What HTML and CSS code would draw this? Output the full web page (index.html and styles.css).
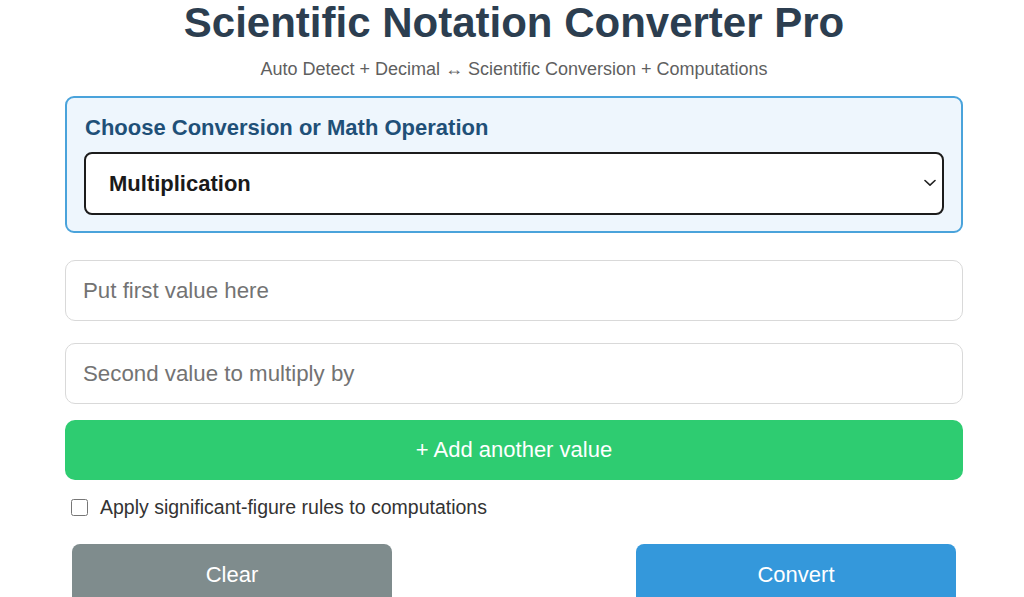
FILE: index.html
```html
<!DOCTYPE html>
<html lang="en">
<head>
<meta charset="utf-8">
<title>Scientific Notation Converter Pro</title>
<link rel="stylesheet" href="styles.css">
</head>
<body>
<main class="container">
  <h1 class="title">Scientific Notation Converter Pro</h1>
  <p class="subtitle">Auto Detect + Decimal ↔ Scientific Conversion + Computations</p>

  <section class="op-panel">
    <label class="op-label" for="op">Choose Conversion or Math Operation</label>
    <div class="select-wrap">
      <select id="op" class="op-select">
        <option>Multiplication</option>
        <option>Division</option>
        <option>Addition</option>
        <option>Subtraction</option>
      </select>
      <svg class="chevron" width="12" height="8" viewBox="0 0 12 8" aria-hidden="true">
        <path d="M1 1.5 L6 6.2 L11 1.5" fill="none" stroke="#222222" stroke-width="1.6" stroke-linecap="round" stroke-linejoin="round"/>
      </svg>
    </div>
  </section>

  <input class="value-input first" type="text" placeholder="Put first value here">
  <input class="value-input second" type="text" placeholder="Second value to multiply by">

  <button class="add-btn" type="button">+ Add another value</button>

  <label class="sigfig-row">
    <input class="sigfig-check" type="checkbox">
    <span>Apply significant-figure rules to computations</span>
  </label>

  <div class="actions">
    <button class="btn btn-clear" type="button">Clear</button>
    <button class="btn btn-convert" type="button">Convert</button>
  </div>
</main>
</body>
</html>
```
FILE: styles.css
```css
* {
  box-sizing: border-box;
}

html, body {
  margin: 0;
  padding: 0;
  background: #ffffff;
}

body {
  font-family: "Liberation Sans", Arial, sans-serif;
  color: #333333;
}

.container {
  width: 898px;
  margin: 0 0 0 65px;
  display: flex;
  flex-direction: column;
}

.title {
  margin: 0;
  font-size: 42px;
  line-height: 46px;
  font-weight: 700;
  color: #2c3e50;
  text-align: center;
}

.subtitle {
  margin: 13px 0 0;
  font-size: 18px;
  color: #5f5f5f;
  text-align: center;
}

.op-panel {
  margin-top: 16px;
  border: 2px solid #4aa3db;
  border-radius: 9px;
  background: #eef6fd;
  padding: 17px 17px 16px;
  display: flex;
  flex-direction: column;
}

.op-label {
  font-size: 22px;
  font-weight: 700;
  color: #1f5078;
  padding-left: 1px;
}

.select-wrap {
  position: relative;
  margin-top: 11px;
  display: flex;
}

.op-select {
  flex: 1;
  height: 63px;
  border: 2px solid #1c1c1c;
  border-radius: 8px;
  background: #ffffff;
  font-family: "Liberation Sans", Arial, sans-serif;
  font-size: 22px;
  font-weight: 700;
  color: #1a1a1a;
  padding: 0 40px 0 23px;
  appearance: none;
  -webkit-appearance: none;
}

.chevron {
  position: absolute;
  right: 8px;
  top: 27px;
  pointer-events: none;
}

.value-input {
  height: 61px;
  border: 1px solid #d9d9d9;
  border-radius: 10px;
  background: #ffffff;
  font-family: "Liberation Sans", Arial, sans-serif;
  font-size: 22.3px;
  padding: 0 17px;
  color: #333333;
}

.value-input::placeholder {
  color: #737373;
}

.value-input.first {
  margin-top: 27px;
}

.value-input.second {
  margin-top: 22px;
}

.add-btn {
  margin-top: 16px;
  height: 60px;
  border: none;
  border-radius: 10px;
  background: #2ecc71;
  color: #ffffff;
  font-family: "Liberation Sans", Arial, sans-serif;
  font-size: 22px;
}

.sigfig-row {
  margin-top: 16px;
  display: flex;
  align-items: center;
  gap: 12px;
  padding-left: 6px;
  font-size: 19.5px;
  line-height: 22px;
  color: #333333;
}

.sigfig-check {
  width: 17px;
  height: 17px;
  margin: 0;
}

.actions {
  margin-top: 26px;
  display: flex;
  justify-content: space-between;
  padding: 0 7px;
}

.btn {
  width: 320px;
  height: 61px;
  border: none;
  border-radius: 8px;
  color: #ffffff;
  font-family: "Liberation Sans", Arial, sans-serif;
  font-size: 22px;
}

.btn-clear {
  background: #7f8c8d;
}

.btn-convert {
  background: #3498db;
}
```
